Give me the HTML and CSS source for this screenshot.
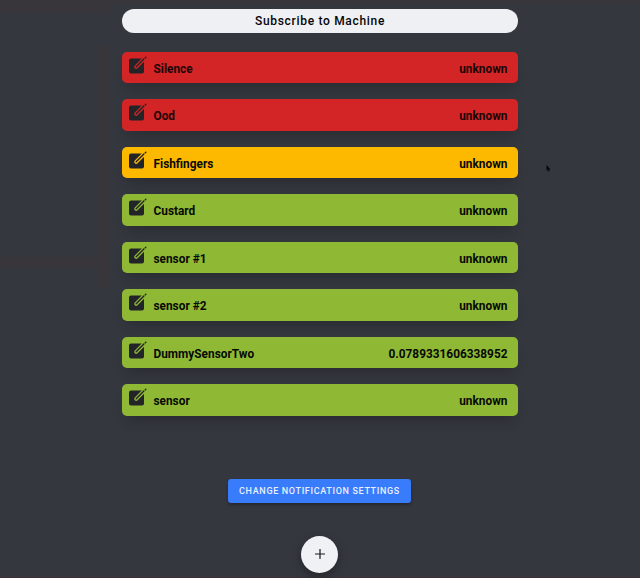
FILE: index.html
```html
<!DOCTYPE html>
<html lang="en">
<head>
<meta charset="utf-8">
<title>Sensors</title>
<link rel="stylesheet" href="styles.css">
</head>
<body>
<svg class="symbols" aria-hidden="true">
  <symbol id="create" viewBox="0 0 18 18">
    <rect x="0" y="2.5" width="15" height="15" rx="2" fill="#222428"/>
    <path class="gap" d="M7.2 10.8 15.1 2.9" fill="none" stroke-width="4" stroke-linecap="round"/>
    <path d="M7.2 10.8 14.9 3.1M16.3 1.7l.5-.5" fill="none" stroke="#222428" stroke-width="1.4" stroke-linecap="round"/>
  </symbol>
</svg>
<main class="page">
  <button class="subscribe">Subscribe to Machine</button>
  <ul class="sensors">
    <li class="sensor danger"><svg class="edit"><use href="#create"/></svg><span class="name">Silence</span><span class="value">unknown</span></li>
    <li class="sensor danger"><svg class="edit"><use href="#create"/></svg><span class="name">Ood</span><span class="value">unknown</span></li>
    <li class="sensor warning"><svg class="edit"><use href="#create"/></svg><span class="name">Fishfingers</span><span class="value">unknown</span></li>
    <li class="sensor"><svg class="edit"><use href="#create"/></svg><span class="name">Custard</span><span class="value">unknown</span></li>
    <li class="sensor"><svg class="edit"><use href="#create"/></svg><span class="name">sensor #1</span><span class="value">unknown</span></li>
    <li class="sensor"><svg class="edit"><use href="#create"/></svg><span class="name">sensor #2</span><span class="value">unknown</span></li>
    <li class="sensor"><svg class="edit"><use href="#create"/></svg><span class="name">DummySensorTwo</span><span class="value">0.0789331606338952</span></li>
    <li class="sensor"><svg class="edit"><use href="#create"/></svg><span class="name">sensor</span><span class="value">unknown</span></li>
  </ul>
  <button class="settings">CHANGE NOTIFICATION SETTINGS</button>
  <button class="add" aria-label="Add"><svg width="10" height="10" viewBox="0 0 10 10"><path d="M5 .2v9.6M.2 5h9.6" stroke="#181a1c" stroke-width="1.2" stroke-linecap="round"/></svg></button>
</main>
<svg class="pointer" width="5" height="7" viewBox="0 0 5 7"><path d="M.5 0 4.5 4.2 3 4.6 3.8 6.3 2.7 6.8 2 5.1.5 5.8z" fill="#08090a"/></svg>
</body>
</html>
```

FILE: styles.css
```css
* {
  box-sizing: border-box;
}

body {
  margin: 0;
  height: 578px;
  overflow: hidden;
  font-family: Roboto, sans-serif;
  background:
    linear-gradient(#3a3036, #3a3036) 0 100% / 100% 1px no-repeat,
    linear-gradient(#38363a, #38363a) 0 0 / 110px 13px no-repeat,
    linear-gradient(#38363a, #38363a) 0 0 / 100% 4px no-repeat,
    linear-gradient(#38363a, #38363a) 98px 46px / 11px 242px no-repeat,
    linear-gradient(#38363a, #38363a) 0 257px / 100px 10px no-repeat,
    #34373e;
}

button {
  display: flex;
  align-items: center;
  justify-content: center;
  padding: 0;
  border: 0;
  font-family: inherit;
}

.symbols {
  display: none;
}

.page {
  display: flex;
  flex-direction: column;
  align-items: center;
  width: 396px;
  margin: 0 auto;
  padding-top: 9px;
}

.subscribe {
  width: 100%;
  height: 24px;
  border-radius: 12px;
  background: #eff0f4;
  color: #050505;
  font-size: 12px;
  font-weight: 500;
  letter-spacing: 0.69px;
}

.sensors {
  display: flex;
  flex-direction: column;
  gap: 16px;
  width: 100%;
  margin: 18.5px 0 0;
  padding: 0;
  list-style: none;
}

.sensor {
  --fill: #8fb935;
  display: flex;
  align-items: center;
  height: 31.5px;
  padding: 0 10.5px 0 7px;
  border-radius: 5px;
  background: var(--fill);
  box-shadow: 0 9px 13px -6px rgba(20, 20, 22, 0.35);
  color: #080a04;
  font-size: 11.85px;
  font-weight: 700;
}

.danger {
  --fill: #d32526;
  color: #1c0606;
}

.warning {
  --fill: #fdb900;
}

.edit {
  width: 18px;
  height: 18px;
  margin-bottom: 5px;
}

.gap {
  stroke: var(--fill);
}

.name {
  margin-left: 6.5px;
  padding-top: 3px;
}

.value {
  margin-left: auto;
  padding-top: 3px;
}

.settings {
  width: 183px;
  height: 24px;
  margin: 63px 1px 0 0;
  border-radius: 3px;
  background: #387bfb;
  box-shadow: 0 2px 3px rgba(0, 0, 0, 0.3);
  color: #e8f0ff;
  font-size: 9px;
  font-weight: 500;
  letter-spacing: 0.66px;
}

.add {
  width: 37px;
  height: 37px;
  margin-top: 33px;
  margin-right: 1px;
  border-radius: 50%;
  background: #f0f1f4;
  box-shadow: 0 3px 8px rgba(0, 0, 0, 0.35);
}

.pointer {
  position: absolute;
  left: 546px;
  top: 165px;
}
```
